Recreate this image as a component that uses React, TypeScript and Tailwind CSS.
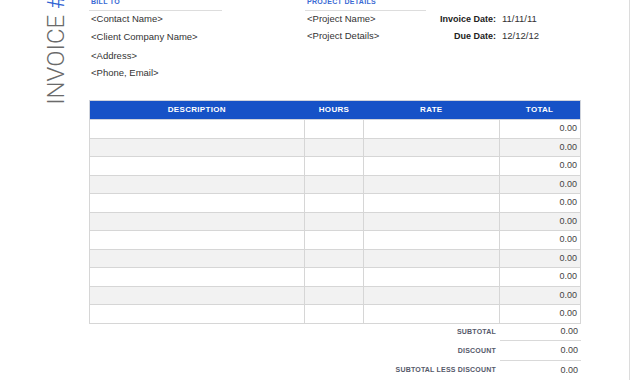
const rows = Array.from({ length: 11 }, (_, i) => i);

const cols = ["w-[216px]", "w-[59px]", "w-[136px]", "w-[81px]"];

function SummaryRow({ label, line, h }: { label: string; line?: boolean; h: string }) {
  return (
    <div className={`flex ${h}`}>
      <div className="w-[411px] flex items-center justify-end pr-[4px] text-[7px] font-bold tracking-[0.2px] text-[#55596a]">
        {label}
      </div>
      <div
        className={`w-[81px] flex items-center justify-end pr-[3px] text-[9px] text-[#444] ${
          line ? "border-b border-[#d9d9d9]" : ""
        }`}
      >
        0.00
      </div>
    </div>
  );
}

export default function App() {
  return (
    <div className="w-[630px] h-[380px] overflow-hidden bg-white border-r border-[#dcdcdc] flex font-['Liberation_Sans',Arial,sans-serif] text-[#333]">
      {/* rotated title */}
      <div className="w-[89px] h-[105px] flex flex-col justify-end items-start pl-[44px] shrink-0">
        <span className="[writing-mode:vertical-rl] rotate-180 whitespace-nowrap font-['Roboto',sans-serif] font-light text-[24px] leading-none text-[#6a6a6a]">
          INVOICE <span className="text-[#2f62d3]">#</span>
        </span>
      </div>

      <div className="w-[492px] shrink-0 flex flex-col">
        {/* header info */}
        <div className="flex h-[100px] shrink-0">
          <div className="w-[216px] flex flex-col">
            <div className="w-[133px] h-[11px] border-b border-[#dddddd] flex items-end pb-[5px] pl-[2px]">
              <span className="text-[7px] font-bold leading-none tracking-[0.3px] text-[#3a6ad4]">BILL TO</span>
            </div>
            <div className="pl-[2px] text-[9.5px]">
              <div className="h-[17px] flex items-center">&lt;Contact Name&gt;</div>
              <div className="h-[19px] flex items-center">&lt;Client Company Name&gt;</div>
              <div className="h-[18px] flex items-center">&lt;Address&gt;</div>
              <div className="h-[17px] flex items-center">&lt;Phone, Email&gt;</div>
            </div>
          </div>
          <div className="w-[121px] flex flex-col">
            <div className="h-[11px] border-b border-[#dddddd] flex items-end pb-[5px] pl-[2px]">
              <span className="text-[7px] font-bold leading-none tracking-[0.3px] text-[#3a6ad4]">PROJECT DETAILS</span>
            </div>
            <div className="pl-[2px] text-[9.5px]">
              <div className="h-[17px] flex items-center">&lt;Project Name&gt;</div>
              <div className="h-[17px] flex items-center">&lt;Project Details&gt;</div>
            </div>
          </div>
          <div className="flex-1 flex flex-col pt-[11px] text-[9.5px]">
            <div className="h-[17px] flex items-center">
              <span className="w-[70px] text-right font-bold text-[9px] text-[#222]">Invoice Date:</span>
              <span className="ml-[6px]">11/11/11</span>
            </div>
            <div className="h-[17px] flex items-center">
              <span className="w-[70px] text-right font-bold text-[9px] text-[#222]">Due Date:</span>
              <span className="ml-[6px]">12/12/12</span>
            </div>
          </div>
        </div>

        {/* table */}
        <div className="flex h-[20px] shrink-0 bg-[#1652c7] border border-[#cfd3db] text-white text-[8px] font-bold tracking-[0.3px]">
          {["DESCRIPTION", "HOURS", "RATE", "TOTAL"].map((h, i) => (
            <div key={h} className={`${cols[i]} flex items-center justify-center ${i === 0 ? "-ml-px" : ""}`}>
              {h}
            </div>
          ))}
        </div>
        {rows.map((r) => (
          <div
            key={r}
            className={`flex h-[18.5px] shrink-0 border-b border-l border-[#d6d6d6] ${r % 2 ? "bg-[#f2f2f2]" : "bg-white"}`}
          >
            <div className="w-[215px] border-r border-[#d6d6d6]" />
            <div className="w-[59px] border-r border-[#d6d6d6]" />
            <div className="w-[136px] border-r border-[#d6d6d6]" />
            <div className="w-[81px] border-r border-[#d6d6d6] flex items-center justify-end pr-[3px] text-[9px] text-[#444]">
              0.00
            </div>
          </div>
        ))}

        {/* summary */}
        <SummaryRow label="SUBTOTAL" line h="h-[18px]" />
        <SummaryRow label="DISCOUNT" line h="h-[20px]" />
        <SummaryRow label="SUBTOTAL LESS DISCOUNT" h="h-[20px]" />
      </div>
    </div>
  );
}
